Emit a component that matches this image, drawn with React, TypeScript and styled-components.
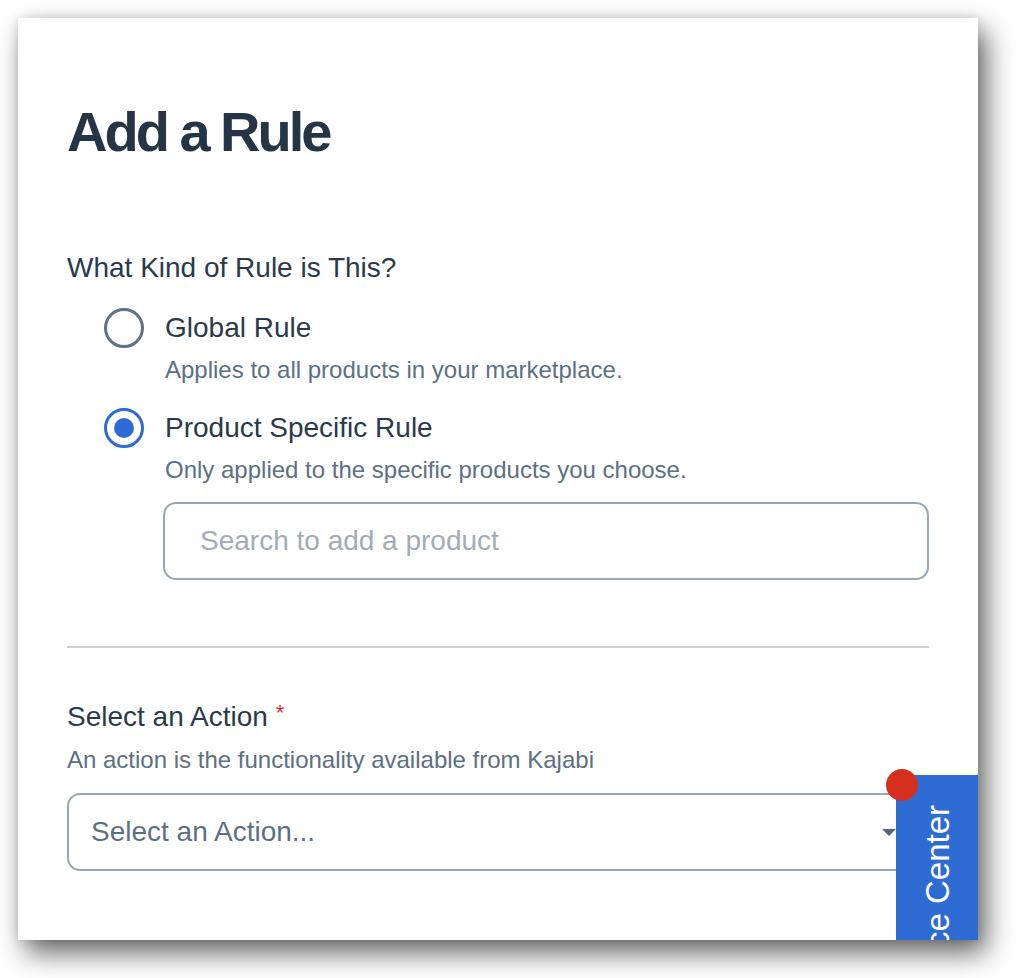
import React from 'react';
import styled, { createGlobalStyle } from 'styled-components';

const GlobalStyle = createGlobalStyle`
  html, body {
    margin: 0;
    padding: 0;
    background: #ffffff;
  }
  body {
    font-family: "Liberation Sans", Arial, Helvetica, sans-serif;
    -webkit-font-smoothing: antialiased;
  }
`;

const Page = styled.div`
  width: 1016px;
  height: 978px;
  padding: 18px;
  box-sizing: border-box;
`;

const Panel = styled.div`
  position: relative;
  width: 960px;
  height: 922px;
  box-sizing: border-box;
  padding: 82px 49px 0;
  background: #ffffff;
  overflow: hidden;
  box-shadow: 8px 13px 26px rgba(0, 0, 0, 0.6), 0 0 10px rgba(0, 0, 0, 0.12);
`;

const Title = styled.h1`
  margin: 0;
  font-size: 56px;
  line-height: 64px;
  font-weight: 700;
  letter-spacing: -3px;
  color: #263545;
`;

const Label = styled.div`
  font-size: 28px;
  line-height: 34px;
  color: #2a3a4b;
`;

const Required = styled.span`
  color: #d0313c;
  font-size: 22px;
  vertical-align: 6px;
  margin-left: 8px;
`;

const Help = styled.div<{ tight?: boolean }>`
  margin-top: ${(p) => (p.tight ? '7px' : '11px')};
  font-size: 24px;
  line-height: 30px;
  color: #5c7084;
`;

const Section = styled.section`
  margin-top: 87px;
`;

const OptionList = styled.div`
  display: flex;
  flex-direction: column;
  gap: 23px;
  margin-top: 23px;
  padding-left: 37px;
`;

const Option = styled.div`
  display: grid;
  grid-template-columns: 40px 1fr;
  column-gap: 21px;
  align-items: center;
`;

const Radio = styled.span<{ checked?: boolean }>`
  width: 40px;
  height: 40px;
  box-sizing: border-box;
  border-radius: 50%;
  border: 3.5px solid ${(p) => (p.checked ? '#2f6bd4' : '#5f7385')};
  display: flex;
  align-items: center;
  justify-content: center;
  &::after {
    content: '';
    display: ${(p) => (p.checked ? 'block' : 'none')};
    width: 20px;
    height: 20px;
    border-radius: 50%;
    background: #2f6bd4;
  }
`;

const OptionBody = styled.div`
  grid-column: 2;
`;

const SearchField = styled.div`
  margin-top: 17px;
  margin-left: -2px;
  height: 78px;
  box-sizing: border-box;
  border: 2px solid #9aa6b2;
  border-radius: 13px;
  display: flex;
  align-items: center;
  padding-left: 35px;
  font-size: 28px;
  color: #a3acb6;
`;

const Divider = styled.hr`
  margin: 66px 0 0;
  border: 0;
  height: 2px;
  background: #cdd1d5;
`;

const ActionSection = styled.section`
  margin-top: 48px;
`;

const SelectBox = styled.div`
  margin-top: 18px;
  height: 78px;
  box-sizing: border-box;
  border: 2px solid #9aa6b2;
  border-radius: 13px;
  display: flex;
  align-items: center;
  justify-content: space-between;
  padding: 0 31px 0 22px;
  font-size: 28px;
  color: #5c7084;
`;

const Caret = styled.span`
  width: 0;
  height: 0;
  border-left: 7px solid transparent;
  border-right: 7px solid transparent;
  border-top: 7px solid #56687a;
`;

const ResourceTab = styled.div`
  position: absolute;
  right: 0;
  top: 757px;
  width: 82px;
  height: 320px;
  background: #2e6bd3;
  display: flex;
  flex-direction: column;
  align-items: center;
  padding-top: 30px;
  box-sizing: border-box;
`;

const TabText = styled.span`
  writing-mode: vertical-rl;
  transform: rotate(180deg);
  color: #ffffff;
  font-size: 33px;
  line-height: 1;
  white-space: nowrap;
`;

const Badge = styled.span`
  position: absolute;
  left: -10px;
  top: -6px;
  width: 32px;
  height: 32px;
  border-radius: 50%;
  background: #d5301f;
`;

const options = [
  { label: 'Global Rule', help: 'Applies to all products in your marketplace.', checked: false },
  {
    label: 'Product Specific Rule',
    help: 'Only applied to the specific products you choose.',
    checked: true,
  },
];

const App = () => {
  return (
    <Page>
      <GlobalStyle />
      <Panel>
        <Title>Add a Rule</Title>
        <Section>
          <Label>What Kind of Rule is This?</Label>
          <OptionList>
            {options.map((option) => (
              <Option key={option.label}>
                <Radio checked={option.checked} />
                <Label>{option.label}</Label>
                <OptionBody>
                  <Help tight>{option.help}</Help>
                  {option.checked && <SearchField>Search to add a product</SearchField>}
                </OptionBody>
              </Option>
            ))}
          </OptionList>
        </Section>
        <Divider />
        <ActionSection>
          <Label>
            Select an Action<Required>*</Required>
          </Label>
          <Help>An action is the functionality available from Kajabi</Help>
          <SelectBox>
            Select an Action...
            <Caret />
          </SelectBox>
        </ActionSection>
        <ResourceTab>
          <Badge />
          <TabText>Resource Center</TabText>
        </ResourceTab>
      </Panel>
    </Page>
  );
};

export default App;
